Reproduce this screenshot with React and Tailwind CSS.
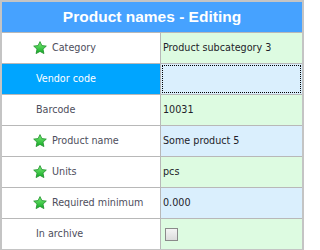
const ROWS = [
  { label: 'Category', star: true, value: 'Product subcategory 3', bg: 'bg-[#ddfbe1]' },
  { label: 'Vendor code', selected: true, value: '', bg: 'bg-[#daeffd]', focus: true },
  { label: 'Barcode', value: '10031', bg: 'bg-[#ddfbe1]' },
  { label: 'Product name', star: true, value: 'Some product 5', bg: 'bg-[#daeffd]' },
  { label: 'Units', star: true, value: 'pcs', bg: 'bg-[#ddfbe1]' },
  { label: 'Required minimum', star: true, value: '0.000', bg: 'bg-[#daeffd]' },
  { label: 'In archive', check: true, bg: 'bg-[#ddfbe1]' },
]

function Star() {
  return (
    <svg width="14" height="14" viewBox="0 0 14 14" className="shrink-0">
      <defs>
        <linearGradient id="sg" x1="0" y1="0" x2="0" y2="1">
          <stop offset="0" stopColor="#7ef07a" />
          <stop offset="1" stopColor="#12a824" />
        </linearGradient>
      </defs>
      <polygon
        points="7,0.6 8.9,4.6 13.3,5.1 10,8.1 10.9,12.6 7,10.4 3.1,12.6 4,8.1 0.7,5.1 5.1,4.6"
        fill="url(#sg)"
        stroke="#1d8f2a"
        strokeWidth="0.8"
        strokeLinejoin="round"
      />
    </svg>
  )
}

export default function App() {
  return (
    <div
      className="w-[304px] h-[250px] border-x-2 border-t-2 border-b border-[#c4c4c4] bg-white text-[10.7px]"
      style={{ fontFamily: '"DejaVu Sans Condensed", "Liberation Sans", sans-serif' }}
    >
      {/* Header */}
      <div className="h-[30px] bg-[#46a2ff] flex items-center justify-center text-white font-bold text-[15.5px] font-['Liberation_Sans',sans-serif]">
        Product names - Editing
      </div>

      {ROWS.map((row) => (
        <div key={row.label} className="h-[31px] flex border-t border-[#b8b8b8]">
          <div
            className={`w-[159px] flex items-center border-r border-[#b8b8b8] ${
              row.selected ? 'bg-[#00a5ff] text-white' : 'bg-white text-[#4e4e5c]'
            } ${row.star ? 'pl-[31px] gap-[5px]' : 'pl-[34px]'}`}
          >
            {row.star && <Star />}
            <span>{row.label}</span>
          </div>
          <div className={`flex-1 flex items-center ${row.bg} ${row.focus ? 'p-px' : 'pl-[2px]'}`}>
            {row.focus ? (
              <div className="w-full h-full border border-dotted border-black" />
            ) : row.check ? (
              <div className="ml-[2px] w-[13px] h-[13px] border border-[#8a8a8a] bg-gradient-to-b from-[#f4f4f4] to-[#dcdcdc]" />
            ) : (
              <span className="text-[#1e1e2a]">{row.value}</span>
            )}
          </div>
        </div>
      ))}
    </div>
  )
}
